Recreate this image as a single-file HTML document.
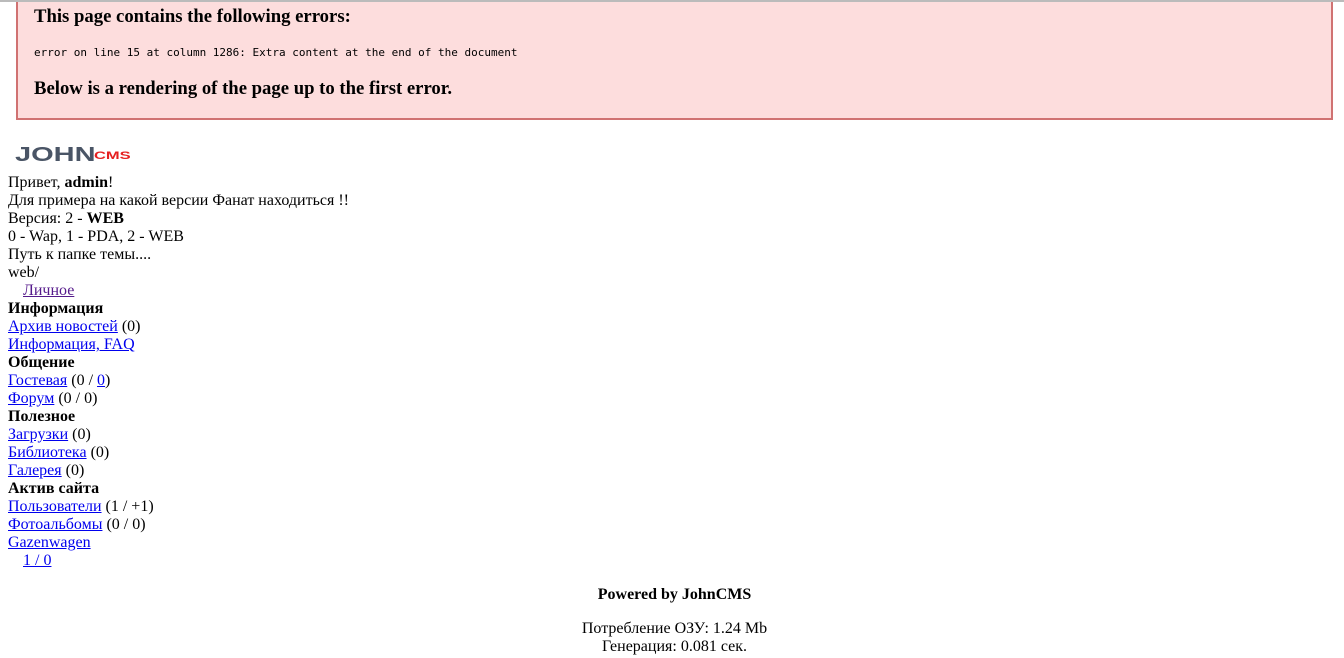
<!DOCTYPE html>
<html><head><meta charset="utf-8"><style>
body{margin:0;width:1344px;height:658px;overflow:hidden;background:#fff;font-family:"Liberation Serif",serif;font-size:16px;color:#000;position:relative}
.topline{position:absolute;left:0;top:0;width:1344px;height:2px;background:#bbb;z-index:2}
.err{position:absolute;left:16px;top:0;width:1313px;height:118px;background:#fddddd;border:2px solid #d07272;border-top:none;}
.err h3{position:absolute;left:16px;margin:0;font-size:18.7px;font-weight:bold}
.err .m{position:absolute;left:16px;top:46px;font-family:"DejaVu Sans Mono","Liberation Mono",monospace;font-size:11px}
a{color:#00e}
a.v{color:#551a8b}
.main{position:absolute;left:8px;top:174px;line-height:18px}
.in{margin-left:15px}
.j{position:absolute;left:15px;top:144px;color:#4a5566;font-family:"Liberation Sans",sans-serif;font-weight:900;font-size:20px;transform:scaleX(1.45);transform-origin:left}
.c{position:absolute;left:94px;top:150px;color:#e52020;font-family:"Liberation Sans",sans-serif;font-weight:900;font-size:11px;transform:scaleX(1.5);transform-origin:left}
.foot{position:absolute;left:0;width:1349px;text-align:center;line-height:18px}
</style></head><body>
<div class="topline"></div>
<div class="err">
<h3 style="top:6px">This page contains the following errors:</h3>
<div class="m">error on line 15 at column 1286: Extra content at the end of the document</div>
<h3 style="top:78px">Below is a rendering of the page up to the first error.</h3>
</div>
<div class="j">JOHN</div><div class="c">CMS</div>
<div class="main">
Привет, <b>admin</b>!<br>
Для примера на какой версии Фанат находиться !!<br>
Версия: 2 - <b>WEB</b><br>
0 - Wap, 1 - PDA, 2 - WEB<br>
Путь к папке темы....<br>
web/<br>
<a class="v in" href="#">Личное</a><br>
<b>Информация</b><br>
<a href="#">Архив новостей</a> (0)<br>
<a href="#">Информация, FAQ</a><br>
<b>Общение</b><br>
<a href="#">Гостевая</a> (0 / <a href="#">0</a>)<br>
<a href="#">Форум</a> (0 / 0)<br>
<b>Полезное</b><br>
<a href="#">Загрузки</a> (0)<br>
<a href="#">Библиотека</a> (0)<br>
<a href="#">Галерея</a> (0)<br>
<b>Актив сайта</b><br>
<a href="#">Пользователи</a> (1 / +1)<br>
<a href="#">Фотоальбомы</a> (0 / 0)<br>
<a href="#">Gazenwagen</a><br>
<a class="in" href="#">1 / 0</a>
</div>
<div class="foot" style="top:586px"><b>Powered by JohnCMS</b></div>
<div class="foot" style="top:620px">Потребление ОЗУ: 1.24 Mb<br>Генерация: 0.081 сек.</div>
</body></html>
